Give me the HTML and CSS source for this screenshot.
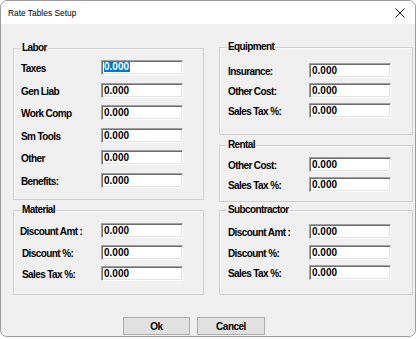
FILE: index.html
```html
<!DOCTYPE html>
<html>
<head>
<meta charset="utf-8">
<link rel="stylesheet" href="styles.css">
</head>
<body>
<div class="window">
  <div class="titlebar">
    <span class="title">Rate Tables Setup</span>
    <svg class="close" width="10" height="10" viewBox="0 0 10 10"><path d="M0.5 0.5 L9.5 9.5 M9.5 0.5 L0.5 9.5" stroke="#1a1a1a" stroke-width="1"/></svg>
  </div>
  <div class="content">
    <div class="groups">
      <div class="col col-left">
        <div class="group labor">
          <div class="gtitle">Labor</div>
          <div class="rows rows-labor">
            <div class="row"><span class="lbl">Taxes</span><div class="field"><span class="sel">0.000</span></div></div>
            <div class="row"><span class="lbl">Gen Liab</span><div class="field">0.000</div></div>
            <div class="row"><span class="lbl">Work Comp</span><div class="field">0.000</div></div>
            <div class="row"><span class="lbl">Sm Tools</span><div class="field">0.000</div></div>
            <div class="row"><span class="lbl">Other</span><div class="field">0.000</div></div>
            <div class="row"><span class="lbl">Benefits:</span><div class="field">0.000</div></div>
          </div>
        </div>
        <div class="group material">
          <div class="gtitle">Material</div>
          <div class="rows rows-mat">
            <div class="row"><span class="lbl lbl-shift">Discount Amt :</span><div class="field">0.000</div></div>
            <div class="row"><span class="lbl">Discount %:</span><div class="field">0.000</div></div>
            <div class="row"><span class="lbl">Sales Tax %:</span><div class="field">0.000</div></div>
          </div>
        </div>
      </div>
      <div class="col col-right">
        <div class="group equipment">
          <div class="gtitle">Equipment</div>
          <div class="rows rows-eq">
            <div class="row"><span class="lbl">Insurance:</span><div class="field">0.000</div></div>
            <div class="row"><span class="lbl">Other Cost:</span><div class="field">0.000</div></div>
            <div class="row"><span class="lbl">Sales Tax %:</span><div class="field">0.000</div></div>
          </div>
        </div>
        <div class="group rental">
          <div class="gtitle">Rental</div>
          <div class="rows rows-rent">
            <div class="row"><span class="lbl">Other Cost:</span><div class="field">0.000</div></div>
            <div class="row"><span class="lbl">Sales Tax %:</span><div class="field">0.000</div></div>
          </div>
        </div>
        <div class="group subcontractor">
          <div class="gtitle">Subcontractor</div>
          <div class="rows rows-sub">
            <div class="row"><span class="lbl">Discount Amt :</span><div class="field">0.000</div></div>
            <div class="row"><span class="lbl">Discount %:</span><div class="field">0.000</div></div>
            <div class="row"><span class="lbl">Sales Tax %:</span><div class="field">0.000</div></div>
          </div>
        </div>
      </div>
    </div>
    <div class="buttons">
      <div class="btn btn-ok">Ok</div>
      <div class="btn btn-cancel">Cancel</div>
    </div>
  </div>
</div>
</body>
</html>
```

FILE: styles.css
```css
* { box-sizing: border-box; }
html, body {
  margin: 0;
  padding: 0;
  background: #ffffff;
}
body {
  font-family: "Liberation Sans", Arial, sans-serif;
  color: #000;
}
.window {
  width: 416px;
  height: 337px;
  border: 1px solid #9c9c9c;
  border-radius: 7px;
  overflow: hidden;
  background: #f0f0f0;
  display: flex;
  flex-direction: column;
}
.titlebar {
  height: 23px;
  background: #ffffff;
  display: flex;
  align-items: center;
  justify-content: space-between;
  padding: 0 10px 0 7px;
}
.title {
  font-size: 8.4px;
  color: #000;
  letter-spacing: 0;
  margin-top: 1px;
}
.close {
  display: block;
  margin-top: 1px;
}
.content {
  flex: 1;
  display: flex;
  flex-direction: column;
  padding: 23px 0 0 12px;
}
.groups {
  display: flex;
  gap: 15px;
  align-items: flex-start;
}
.col {
  display: flex;
  flex-direction: column;
}
.col-left { width: 191px; margin-top: 1px; }
.col-right { width: 194px; }
.group {
  border: 1px solid #cfcfcf;
  box-shadow: inset 1px 1px 0 #fbfbfb;
  padding: 0 0 0 7px;
}
.labor { height: 152px; }
.material { height: 85px; margin-top: 10px; }
.equipment { height: 88px; }
.rental { height: 57px; margin-top: 10px; }
.subcontractor { height: 85px; margin-top: 8px; }
.gtitle {
  display: table;
  margin: -7px 0 0 0;
  padding: 0 1px;
  background: #f0f0f0;
  font-size: 10px;
  line-height: 12px;
  font-weight: bold;
  letter-spacing: -0.6px;
}
.rows {
  display: flex;
  flex-direction: column;
}
.rows-labor { margin-top: 6px; gap: 7.5px; }
.rows-mat { margin-top: 7px; gap: 6.5px; }
.rows-eq { margin-top: 10px; gap: 5px; }
.rows-rent { margin-top: 6px; gap: 5px; }
.rows-sub { margin-top: 8px; gap: 5.5px; }
.row {
  display: flex;
  align-items: center;
  height: 15px;
}
.lbl {
  width: 80px;
  font-size: 10px;
  font-weight: bold;
  letter-spacing: -0.6px;
  white-space: nowrap;
  margin-top: 2px;
}
.material .lbl { padding-left: 1px; }
.material .lbl-shift { padding-left: 0; margin-left: -1px; width: 81px; }
.col-right .lbl { width: 82px; padding-left: 1px; }
.field {
  width: 82px;
  height: 15px;
  background: #ffffff;
  border: 1px solid;
  border-color: #a0a0a0 #ffffff #ffffff #a0a0a0;
  box-shadow: inset 1px 1px 0 #6d6d6d, inset -1px -1px 0 #e3e3e3;
  font-size: 10px;
  font-weight: bold;
  line-height: 13px;
  padding: 0 0 0 2px;
  white-space: nowrap;
}
.sel {
  display: inline-block;
  background: #0078d7;
  color: #ffffff;
  line-height: 10px;
  padding: 0 1px 0 0;
  vertical-align: 1px;
}
.buttons {
  display: flex;
  gap: 7px;
  margin-top: 22px;
  padding-left: 110px;
}
.btn {
  height: 18px;
  background: #e1e1e1;
  border: 1px solid #adadad;
  font-size: 10px;
  font-weight: bold;
  letter-spacing: -0.5px;
  display: flex;
  align-items: center;
  justify-content: center;
}
.btn-ok { width: 67px; }
.btn-cancel { width: 68px; }
```
